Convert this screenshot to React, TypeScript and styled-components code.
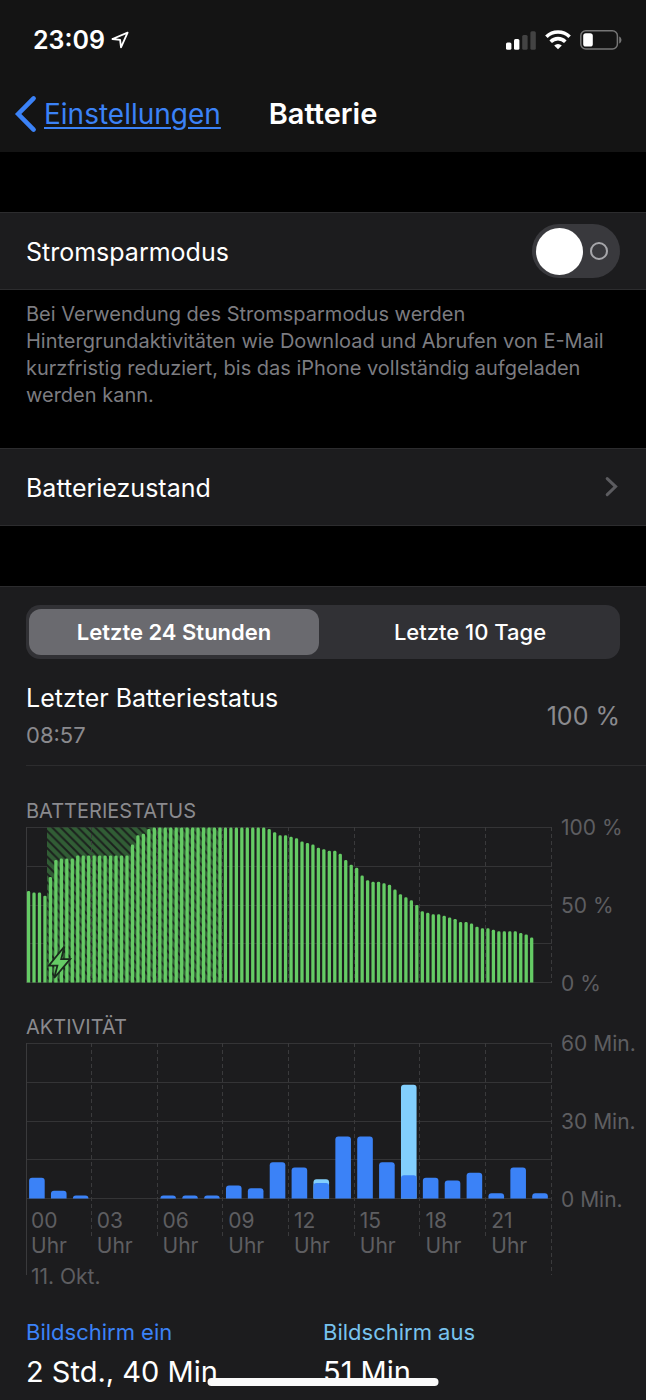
import React, { useState } from 'react';
import styled, { createGlobalStyle, css } from 'styled-components';

const GlobalStyle = createGlobalStyle`
  *, *::before, *::after { box-sizing: border-box; }
  html, body { margin: 0; padding: 0; background: #000; }
  body {
    font-family: Inter, "Liberation Sans", sans-serif;
    color: #fff;
    -webkit-font-smoothing: antialiased;
  }
`;

const color = {
  bar: '#141414',
  cell: '#1c1c1e',
  line: '#2c2c2e',
  grid: '#343436',
  blue: '#3b82f7',
  sky: '#82cffd',
  green: '#65cb65',
  muted: '#8a8a8e',
  axis: '#5e5e61',
};

const Screen = styled.div`
  height: 100vh;
  min-height: 640px;
  overflow: hidden;
  background: #000;
`;

const Header = styled.header`
  background: ${color.bar};
  height: 152px;
`;

const StatusBar = styled.div`
  display: flex;
  align-items: center;
  justify-content: space-between;
  height: 80px;
  padding: 0 24px 0 33px;
`;

const Clock = styled.div`
  display: flex;
  align-items: center;
  gap: 6px;
  font-size: 25px;
  line-height: 30px;
  font-weight: 600;
`;

const StatusIcons = styled.div`
  display: flex;
  align-items: center;
  gap: 9px;
`;

const NavBar = styled.nav`
  display: grid;
  grid-template-columns: 1fr auto 1fr;
  align-items: center;
  height: 68px;
  padding: 0 14px;
`;

const BackLink = styled.a`
  display: flex;
  align-items: center;
  gap: 7px;
  color: ${color.blue};
  font-size: 28px;
  line-height: 34px;
  text-decoration: none;

  span {
    text-decoration: underline;
    text-decoration-thickness: 2px;
    text-underline-offset: 3px;
  }
`;

const NavTitle = styled.h1`
  margin: 0;
  font-size: 29px;
  line-height: 34px;
  font-weight: 600;
`;

const Group = styled.section<{ $gap: number }>`
  margin-top: ${(p) => p.$gap}px;
`;

const cell = css`
  display: flex;
  align-items: center;
  justify-content: space-between;
  width: 100%;
  height: 78px;
  padding: 0 26px;
  border: solid ${color.line};
  border-width: 1px 0;
  background: ${color.cell};
  color: #fff;
  font-family: inherit;
  font-size: 25px;
  line-height: 32px;
`;

const ToggleCell = styled.label`
  ${cell}
`;

const LinkCell = styled.a`
  ${cell}
  text-decoration: none;
`;

const CellText = styled.span`
  padding-top: 2px;
`;

const Footnote = styled.p`
  margin: 0;
  padding: 11px 24px 0 26px;
  color: #7c7c80;
  font-size: 20px;
  line-height: 27px;
`;

const Switch = styled.input`
  appearance: none;
  display: flex;
  align-items: center;
  justify-content: space-between;
  width: 88px;
  height: 54px;
  margin: 0;
  padding: 0 12px 0 4px;
  border-radius: 27px;
  background: #39393d;

  &::before {
    content: '';
    width: 47px;
    height: 47px;
    border-radius: 50%;
    background: #fff;
  }

  &::after {
    content: '';
    width: 18px;
    height: 18px;
    border: 2px solid #a6a6aa;
    border-radius: 50%;
  }

  &:checked {
    flex-direction: row-reverse;
    padding: 0 4px 0 12px;
    background: ${color.green};
  }
`;

const Panel = styled.section`
  margin-top: 60px;
  padding: 18px 0 40px;
  border-top: 1px solid ${color.line};
  background: ${color.cell};
`;

const Segments = styled.div`
  display: grid;
  grid-template-columns: 1fr 1fr;
  height: 54px;
  margin: 0 26px;
  padding: 4px 3px;
  border-radius: 14px;
  background: #313135;
`;

const Segment = styled.label<{ $active: boolean }>`
  display: flex;
  align-items: center;
  justify-content: center;
  margin-right: ${(p) => (p.$active ? 4 : 0)}px;
  border-radius: 12px;
  background: ${(p) => (p.$active ? '#6a6a6f' : 'transparent')};
  font-size: 22px;
  line-height: 28px;
  font-weight: ${(p) => (p.$active ? 600 : 500)};

  input {
    appearance: none;
    width: 0;
    height: 0;
    margin: 0;
  }
`;

const LastCharge = styled.div`
  display: flex;
  align-items: center;
  justify-content: space-between;
  height: 107px;
  margin-left: 26px;
  padding: 7px 26px 0 0;
  border-bottom: 1px solid ${color.line};
`;

const ChargeText = styled.div`
  display: flex;
  flex-direction: column;
  gap: 6px;
`;

const ChargeTitle = styled.span`
  font-size: 25px;
  line-height: 32px;
`;

const ChargeTime = styled.span`
  color: ${color.muted};
  font-size: 22px;
  line-height: 30px;
`;

const ChargeLevel = styled.span`
  color: ${color.muted};
  font-size: 25px;
  line-height: 32px;
`;

const Chart = styled.section`
  margin-left: 26px;
`;

const ChartTitle = styled.h2<{ $top: number }>`
  margin: 0;
  padding-top: ${(p) => p.$top}px;
  color: ${color.muted};
  font-size: 20px;
  line-height: 28px;
  font-weight: 400;
`;

const ChartBody = styled.div`
  display: grid;
  grid-template-columns: 1fr 94px;
  margin-top: 2px;
`;

const Plot = styled.div`
  display: grid;

  > * {
    grid-area: 1 / 1;
  }
`;

const PlotSvg = styled.svg<{ $height: number }>`
  display: block;
  width: 100%;
  height: ${(p) => p.$height}px;
`;

const YAxis = styled.div`
  display: flex;
  flex-direction: column;
  justify-content: space-between;
  height: 180px;
  margin: -11px 0 -13px;
  padding-left: 9px;
  color: ${color.axis};
  font-size: 21px;
  line-height: 24px;
  white-space: nowrap;
`;

const XAxis = styled.div`
  display: grid;
  grid-template-columns: repeat(8, 1fr);
  align-content: start;
  padding-top: 165px;
  color: ${color.axis};
  font-size: 21px;
  line-height: 25px;
`;

const Hour = styled.span`
  width: min-content;
  padding-left: 5px;
`;

const Day = styled.span`
  grid-column: 1 / -1;
  padding: 6px 0 0 5px;
`;

const Totals = styled.dl`
  display: grid;
  grid-template-columns: 1fr 1fr;
  margin: 29px 26px 0;
`;

const TotalName = styled.dt<{ $color: string }>`
  color: ${(p) => p.$color};
  font-size: 22px;
  line-height: 28px;
`;

const TotalValue = styled.dd`
  margin: 0;
  padding-top: 7px;
  font-size: 29px;
  line-height: 38px;
`;

const HomeIndicator = styled.div`
  position: fixed;
  bottom: 14px;
  left: 50%;
  width: 231px;
  height: 8px;
  border-radius: 4px;
  background: #fafafa;
  transform: translateX(-50%);
`;

const levels = [
  59, 58, 58, 56, 68, 79, 80, 80, 80, ...Array(10).fill(82), 89, 95, 96, 99,
  ...Array(21).fill(100), 99, 97, 95, 95, 94, 93, 91, 90, 89, 87, 86, 85, 85,
  83, 79, 76, 74, 69, 66, 65, 65, 64, 63, 60, 57, 55, 53, 50, 46, 45, 44, 44,
  43, 42, 41, 39, 39, 38, 36, 35, 35, 34, 33, 33, 33, 33, 32, 31, 29,
] as number[];

const screenOn = [8, 3, 1, 0, 0, 0, 1, 1, 1, 5, 4, 14, 12, 6, 24, 24, 14, 9, 8, 7, 10, 2, 12, 2];
const screenOff: Record<number, number> = { 13: 1.5, 17: 35 };

const WIDTH = 526;
const PLOT = 155;
const SPAN = 525;

const columns = Array.from({ length: 9 }, (_, i) => i);

function HorizontalGrid() {
  return (
    <g stroke={color.grid} strokeWidth="1">
      {[0, 1, 2, 3, 4].map((i) => {
        const y = Math.round((i * PLOT) / 4) + 0.5;
        return <line key={i} x1="0" x2={WIDTH} y1={y} y2={y} />;
      })}
    </g>
  );
}

function VerticalGrid({ inner, outer }: { inner: number; outer: number }) {
  return (
    <g stroke="#3a3a3c" strokeWidth="1">
      {columns.map((i) => {
        const x = Math.floor((i * SPAN) / 8) + 0.5;
        return (
          <line
            key={i}
            x1={x}
            x2={x}
            y1="0"
            y2={i === 0 || i === 8 ? outer : inner}
            strokeDasharray={i === 0 ? undefined : '4 3'}
          />
        );
      })}
    </g>
  );
}

function roundedBar(x: number, w: number, h: number, r: number) {
  const top = PLOT + 0.5 - h;
  const c = Math.min(r, h);
  return `M${x} ${PLOT + 0.5}V${top + c}q0 ${-c} ${c} ${-c}h${w - 2 * c}q${c} 0 ${c} ${c}V${PLOT + 0.5}z`;
}

function BatteryPlot() {
  const pitch = SPAN / 96;
  return (
    <PlotSvg $height={156} viewBox="0 0 526 156" preserveAspectRatio="none" aria-hidden="true">
      <defs>
        <pattern id="hatch" width="8.6" height="8.6" patternUnits="userSpaceOnUse">
          <rect width="8.6" height="8.6" fill="#315d35" />
          <path d="M-2 -2L10.6 10.6M-2 6.6L2 10.6M6.6 -2L10.6 2" stroke="#1b201d" strokeWidth="1.9" />
        </pattern>
      </defs>
      <HorizontalGrid />
      <rect x="21" y="0.5" width="175" height="155" fill="url(#hatch)" />
      <VerticalGrid inner={156} outer={156} />
      {levels.map((v, i) => (
        <path key={i} d={roundedBar(0.9 + i * pitch, 3.3, (v * PLOT) / 100, 1.4)} fill={color.green} />
      ))}
      <path
        d="M38.4 119.5L22.8 138.6H31.4L28.2 151L44.2 132.2H35.2z"
        fill={color.green}
        stroke="#1a2a1c"
        strokeWidth="1.8"
        strokeLinejoin="miter"
      />
    </PlotSvg>
  );
}

function ActivityPlot() {
  const pitch = SPAN / 24;
  return (
    <PlotSvg $height={232} viewBox="0 0 526 232" preserveAspectRatio="none" aria-hidden="true">
      <HorizontalGrid />
      <VerticalGrid inner={194} outer={232} />
      {screenOn.map((on, i) => {
        const x = 3.1 + i * pitch;
        const off = screenOff[i] ?? 0;
        const unit = PLOT / 60;
        return (
          <g key={i}>
            {off > 0 && <path d={roundedBar(x, 15.6, (on + off) * unit, 3)} fill={color.sky} />}
            {on > 0 && <path d={roundedBar(x, 15.6, Math.max(on * unit, 3), 3)} fill={color.blue} />}
          </g>
        );
      })}
    </PlotSvg>
  );
}

function LocationIcon() {
  return (
    <svg width="19" height="19" viewBox="0 0 19 19" fill="none" stroke="#fff" strokeWidth="1.8" strokeLinejoin="round" aria-hidden="true">
      <path d="M16.6 1.6L1.4 8L9.1 8.9L10 16.4z" />
    </svg>
  );
}

function SignalIcon() {
  return (
    <svg width="30" height="19" viewBox="0 0 30 19" aria-hidden="true">
      <rect x="0" y="11.5" width="5.4" height="7.2" rx="1.5" fill="#fff" />
      <rect x="8" y="8" width="5.4" height="10.7" rx="1.5" fill="#fff" />
      <rect x="16.2" y="4" width="5.4" height="14.7" rx="1.5" fill="#434343" />
      <rect x="24.4" y="0.3" width="5.4" height="18.4" rx="1.5" fill="#434343" />
    </svg>
  );
}

function WifiIcon() {
  return (
    <svg width="26" height="20" viewBox="0 0 26 20" fill="none" stroke="#fff" strokeWidth="3.6" aria-hidden="true">
      <path d="M1.4 6.8A16.6 16.6 0 0 1 24.6 6.8" />
      <path d="M5.7 11.7A10.3 10.3 0 0 1 20.3 11.7" />
      <path d="M13 19.3L9.2 15.6A5.4 5.4 0 0 1 16.8 15.6z" fill="#fff" stroke="none" />
    </svg>
  );
}

function BatteryIcon() {
  return (
    <svg width="42" height="20" viewBox="0 0 42 20" aria-hidden="true">
      <rect x="0.8" y="0.8" width="36.6" height="18.2" rx="5" fill="none" stroke="#767676" strokeWidth="1.5" />
      <rect x="3.2" y="3.3" width="9.6" height="13.2" rx="2.6" fill="#fff" />
      <path d="M39.2 6.4c3 1.2 3 5.8 0 7z" fill="#767676" />
    </svg>
  );
}

const ranges = ['Letzte 24 Stunden', 'Letzte 10 Tage'];
const hours = ['00', '03', '06', '09', '12', '15', '18', '21'];

export default function App() {
  const [range, setRange] = useState(0);

  return (
    <Screen>
      <GlobalStyle />
      <Header>
        <StatusBar>
          <Clock>
            <span>23:09</span>
            <LocationIcon />
          </Clock>
          <StatusIcons>
            <SignalIcon />
            <WifiIcon />
            <BatteryIcon />
          </StatusIcons>
        </StatusBar>
        <NavBar>
          <BackLink href="#einstellungen">
            <svg width="23" height="38" viewBox="0 0 23 38" fill="none" stroke={color.blue} strokeWidth="4.6" strokeLinecap="round" strokeLinejoin="miter" aria-hidden="true">
              <path d="M19.6 3.4L4.2 19L19.6 34.6" />
            </svg>
            <span>Einstellungen</span>
          </BackLink>
          <NavTitle>Batterie</NavTitle>
        </NavBar>
      </Header>

      <main>
        <Group $gap={60}>
          <ToggleCell>
            <CellText>Stromsparmodus</CellText>
            <Switch type="checkbox" role="switch" />
          </ToggleCell>
          <Footnote>
            Bei Verwendung des Stromsparmodus werden Hintergrundaktivitäten wie Download und Abrufen von E-Mail
            kurzfristig reduziert, bis das iPhone vollständig aufgeladen werden kann.
          </Footnote>
        </Group>

        <Group $gap={39}>
          <LinkCell href="#batteriezustand">
            <CellText>Batteriezustand</CellText>
            <svg width="15" height="22" viewBox="0 0 15 22" fill="none" stroke="#5c5c60" strokeWidth="3" strokeLinecap="round" aria-hidden="true">
              <path d="M2.2 2.6L10.6 10.6L2.2 18.6" />
            </svg>
          </LinkCell>
        </Group>

        <Panel>
          <Segments role="radiogroup" aria-label="Zeitraum">
            {ranges.map((name, i) => (
              <Segment key={name} $active={range === i}>
                <input type="radio" name="range" checked={range === i} onChange={() => setRange(i)} />
                {name}
              </Segment>
            ))}
          </Segments>

          <LastCharge>
            <ChargeText>
              <ChargeTitle>Letzter Batteriestatus</ChargeTitle>
              <ChargeTime>08:57</ChargeTime>
            </ChargeText>
            <ChargeLevel>100 %</ChargeLevel>
          </LastCharge>

          <Chart>
            <ChartTitle $top={31}>BATTERIESTATUS</ChartTitle>
            <ChartBody>
              <BatteryPlot />
              <YAxis>
                <span>100 %</span>
                <span>50 %</span>
                <span>0 %</span>
              </YAxis>
            </ChartBody>
          </Chart>

          <Chart>
            <ChartTitle $top={30}>AKTIVITÄT</ChartTitle>
            <ChartBody>
              <Plot>
                <ActivityPlot />
                <XAxis>
                  {hours.map((h) => (
                    <Hour key={h}>{h} Uhr</Hour>
                  ))}
                  <Day>11. Okt.</Day>
                </XAxis>
              </Plot>
              <YAxis>
                <span>60 Min.</span>
                <span>30 Min.</span>
                <span>0 Min.</span>
              </YAxis>
            </ChartBody>
          </Chart>

          <Totals>
            <div>
              <TotalName $color={color.blue}>Bildschirm ein</TotalName>
              <TotalValue>2 Std., 40 Min.</TotalValue>
            </div>
            <div>
              <TotalName $color="#78c3ee">Bildschirm aus</TotalName>
              <TotalValue>51 Min.</TotalValue>
            </div>
          </Totals>
        </Panel>
      </main>
      <HomeIndicator />
    </Screen>
  );
}
